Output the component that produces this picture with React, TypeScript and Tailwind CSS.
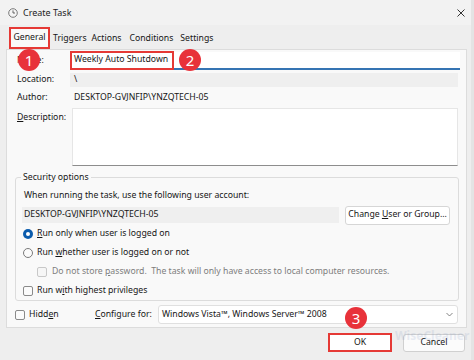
import React from "react";

const Badge = ({ n, x, y }: { n: string; x: string; y: string }) => (
  <div
    className={`absolute ${x} ${y} w-[22px] h-[22px] rounded-full bg-[#e8323a] text-white flex items-center justify-center text-[15px] leading-none`}
  >
    {n}
  </div>
);

const Check = ({ disabled }: { disabled?: boolean }) => (
  <span
    className={`inline-block shrink-0 w-[10px] h-[10px] rounded-[2px] border ${
      disabled ? "border-[#c8c8c8] bg-[#f6f6f6]" : "border-[#8a8a8a] bg-[#fbfbfb]"
    }`}
  />
);

export default function App() {
  return (
    <div
      className="relative w-[474px] h-[360px] overflow-hidden bg-[#eeeeee] text-[8.7px] text-[#161616] whitespace-nowrap"
      style={{ fontFamily: '"Noto Sans", "Open Sans", sans-serif' }}
    >
      {/* title bar */}
      <div className="h-[25px] flex items-center bg-[#f2f2f2]">
        <svg className="ml-[8px]" width="10" height="10" viewBox="0 0 10 10">
          <circle cx="5" cy="5" r="4.3" fill="#f4f4f4" stroke="#7a7a7a" strokeWidth="1" />
          <path d="M5 2.4 V5 H7" fill="none" stroke="#555" strokeWidth="0.9" />
        </svg>
        <span className="ml-[5px] text-[9px] text-[#222]">Create Task</span>
        <svg className="ml-auto mr-[9px]" width="8" height="8" viewBox="0 0 8 8">
          <path d="M0.5 0.5 L7.5 7.5 M7.5 0.5 L0.5 7.5" stroke="#333" strokeWidth="1" />
        </svg>
      </div>

      {/* tabs */}
      <div className="h-[24px] flex items-end pl-[9px]">
        <div className="h-[22px] w-[41px] border-2 border-[#e53935] bg-[#f9f9f9] flex items-center justify-center">
          General
        </div>
        <div className="h-[20px] ml-[3px] flex items-center">Triggers</div>
        <div className="h-[20px] ml-[5px] flex items-center">Actions</div>
        <div className="h-[20px] ml-[8px] flex items-center">Conditions</div>
        <div className="h-[20px] ml-[7px] flex items-center">Settings</div>
      </div>

      {/* panel */}
      <div className="ml-[6px] w-[461px] h-[279px] border border-[#dcdcdc] bg-[#f9f9f9] flex flex-col pl-[10px] pr-[8px]">
        {/* name */}
        <div className="mt-[2px] h-[18px] flex items-center">
          <div className="w-[53px]">Name:</div>
          <div className="flex-1 h-[18px] bg-white border-b-2 border-[#3574b3] relative flex items-center pl-[4px] mr-[-2px]">
            <div className="absolute left-0 top-[-1px] w-[104px] h-[19px] border-2 border-[#e53935]" />
            Weekly Auto Shutdown
          </div>
        </div>
        {/* location */}
        <div className="mt-[3px] h-[14px] flex items-center">
          <div className="w-[53px]">Location:</div>
          <div className="flex-1 h-[14px] bg-[#efefef] flex items-center pl-[4px]">\</div>
        </div>
        {/* author */}
        <div className="mt-[4px] h-[14px] flex items-center">
          <div className="w-[53px]">Author:</div>
          <div className="flex-1 pl-[4px]">DESKTOP-GVJNFIP\YNZQTECH-05</div>
        </div>
        {/* description */}
        <div className="mt-[3px] h-[58px] flex">
          <div className="w-[55px] pt-[3px]">
            <span className="underline underline-offset-1">D</span>escription:
          </div>
          <div className="flex-1 bg-white border border-[#e6e6e6] border-b-[#8d8d8d]" />
        </div>

        {/* security group */}
        <div className="mt-[11px] ml-[-2px] mr-[-1px] h-[124px] border border-[#dcdcdc] rounded-[3px] relative flex flex-col pl-[7px] pr-[8px]">
          <div className="absolute left-[5px] top-[-8px] px-[2px] bg-[#f9f9f9] leading-[14px]">Security options</div>
          <div className="mt-[11px] h-[14px] flex items-center pl-[1px]">
            When running the task, use the following user account:
          </div>
          <div className="mt-[2px] h-[20px] flex items-center">
            <div className="ml-[-1px] w-[318px] h-[16px] bg-[#efefef] flex items-center pl-[2px]">
              DESKTOP-GVJNFIP\YNZQTECH-05
            </div>
            <div className="ml-[6px] w-[105px] h-[19px] bg-white border border-[#d6d6d6] rounded-[3px] flex items-center justify-center">
              Change&nbsp;<span className="underline underline-offset-1">U</span>ser or Group...
            </div>
          </div>
          <div className="h-[18px] flex items-center">
            <span className="w-[10px] h-[10px] rounded-full bg-[#0b5cad] flex items-center justify-center">
              <span className="w-[4px] h-[4px] rounded-full bg-white" />
            </span>
            <span className="ml-[4px]">
              <span className="underline underline-offset-1">R</span>un only when user is logged on
            </span>
          </div>
          <div className="mt-[1px] h-[18px] flex items-center">
            <span className="w-[10px] h-[10px] rounded-full border border-[#7a7a7a] bg-[#fbfbfb]" />
            <span className="ml-[4px]">
              Run <span className="underline underline-offset-1">w</span>hether user is logged on or not
            </span>
          </div>
          <div className="mt-[1px] h-[18px] flex items-center pl-[14px] text-[#7d7d7d]">
            <Check disabled />
            <span className="ml-[5px]">
              Do not store <span className="underline underline-offset-1">p</span>assword.&nbsp; The task will only have access to local computer resources.
            </span>
          </div>
          <div className="mt-[1px] h-[18px] flex items-center">
            <Check />
            <span className="ml-[4px]">
              Run w<span className="underline underline-offset-1">i</span>th highest privileges
            </span>
          </div>
        </div>

        {/* bottom row */}
        <div className="mt-[4px] h-[19px] flex items-center ml-[-2px]">
          <Check />
          <span className="ml-[4px] w-[66px]">
            Hidd<span className="underline underline-offset-1">e</span>n
          </span>
          <span className="w-[63px]">
            <span className="underline underline-offset-1">C</span>onfigure for:
          </span>
          <div className="w-[300px] h-[19px] bg-white border border-[#e0e0e0] rounded-[3px] flex items-center pl-[3px] pr-[4px]">
            <span>Windows Vista™, Windows Server™ 2008</span>
            <svg className="ml-auto" width="7" height="5" viewBox="0 0 7 5">
              <path d="M0.5 1 L3.5 4 L6.5 1" fill="none" stroke="#666" strokeWidth="0.8" />
            </svg>
          </div>
        </div>
      </div>

      {/* buttons */}
      <div className="mt-[5px] flex items-center pl-[328px]">
        <div className="w-[64px] h-[19px] border-2 border-[#e53935] bg-white flex items-center justify-center">OK</div>
        <div className="ml-[11px] w-[62px] h-[18px] border border-[#d0d0d0] rounded-[3px] bg-[#fbfbfb] flex items-center justify-center">Cancel</div>
      </div>

      {/* faint watermark */}
      <div className="absolute left-[395px] top-[327px] opacity-[0.12] pointer-events-none text-[#5a7ab0] text-[12px] font-bold">
        WiseCleaner
      </div>

      <div className="absolute right-0 top-0 w-[3px] h-[360px] bg-[#e4e4e4]" />

      <Badge n="1" x="left-[18px]" y="top-[49px]" />
      <Badge n="2" x="left-[179px]" y="top-[49px]" />
      <Badge n="3" x="left-[345px]" y="top-[307px]" />
    </div>
  );
}
